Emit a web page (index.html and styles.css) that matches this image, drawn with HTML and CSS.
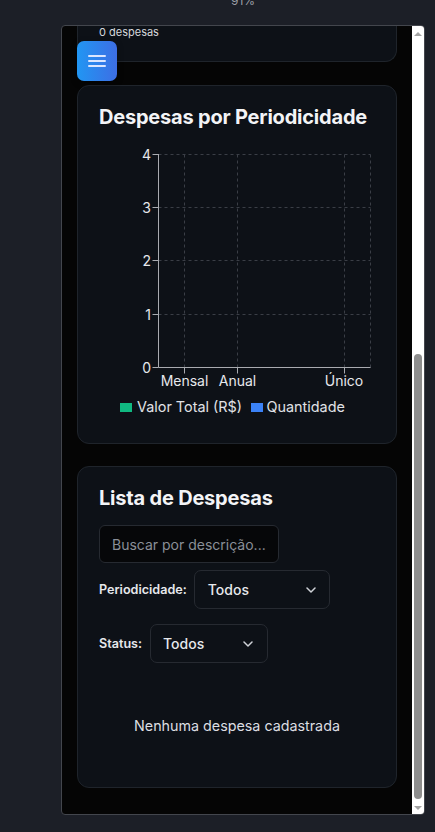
FILE: index.html
```html
<!DOCTYPE html>
<html lang="pt-BR">
<head>
<meta charset="utf-8">
<title>Despesas</title>
<link rel="stylesheet" href="styles.css">
</head>
<body>
<div class="zoom-level"><span>91%</span></div>
<div class="frame">
  <div class="viewport">
    <button class="menu-btn" aria-label="Menu">
      <svg width="18" height="14" viewBox="0 0 18 14"><path d="M1 2h16M1 7h16M1 12h16" stroke="#dbe6ff" stroke-width="2" stroke-linecap="round"/></svg>
    </button>
    <section class="card card-partial">
      <p class="count">0 despesas</p>
    </section>
    <section class="card card-chart">
      <h2 class="card-title">Despesas por Periodicidade</h2>
      <svg class="chart" width="276" height="290" viewBox="0 0 276 290">
        <g class="grid" stroke="#3a3e46" stroke-width="1" stroke-dasharray="3 3" fill="none">
          <path d="M59.5 23.5H271.5M59.5 76.5H271.5M59.5 129.5H271.5M59.5 183.5H271.5"/>
          <path d="M85.5 23.5V236.5M138.5 23.5V236.5M245.5 23.5V236.5M271.5 23.5V236.5"/>
        </g>
        <g class="axis" stroke="#a9abb0" stroke-width="1" fill="none">
          <path d="M59.5 23V236.5H271.5"/>
          <path d="M53.5 23.5H59.5M53.5 76.5H59.5M53.5 129.5H59.5M53.5 183.5H59.5M53.5 236.5H59.5"/>
          <path d="M85.5 236.5V242.5M138.5 236.5V242.5M245.5 236.5V242.5"/>
        </g>
        <g class="ticks" text-anchor="end">
          <text x="52" y="29">4</text>
          <text x="52" y="82">3</text>
          <text x="52" y="135">2</text>
          <text x="52" y="189">1</text>
          <text x="52" y="242">0</text>
        </g>
        <g class="ticks" text-anchor="middle">
          <text x="85.5" y="255">Mensal</text>
          <text x="138.5" y="255">Anual</text>
          <text x="245" y="255">Único</text>
        </g>
        <g class="legend">
          <rect x="21" y="272" width="12" height="9" fill="#10b981"/>
          <text x="38" y="281">Valor Total (R$)</text>
          <rect x="152" y="272" width="12" height="9" fill="#3b82f6"/>
          <text x="167.5" y="281">Quantidade</text>
        </g>
      </svg>
    </section>
    <section class="card card-list">
      <h2 class="card-title">Lista de Despesas</h2>
      <input class="search" type="text" placeholder="Buscar por descrição...">
      <div class="filter">
        <span class="filter-label">Periodicidade:</span>
        <div class="select select-wide">
          <span>Todos</span>
          <svg width="10" height="6" viewBox="0 0 10 6"><path d="M1 1l4 4 4-4" stroke="#cfd2d8" stroke-width="1.5" fill="none" stroke-linecap="round" stroke-linejoin="round"/></svg>
        </div>
      </div>
      <div class="filter filter-status">
        <span class="filter-label">Status:</span>
        <div class="select select-narrow">
          <span>Todos</span>
          <svg width="10" height="6" viewBox="0 0 10 6"><path d="M1 1l4 4 4-4" stroke="#cfd2d8" stroke-width="1.5" fill="none" stroke-linecap="round" stroke-linejoin="round"/></svg>
        </div>
      </div>
      <p class="empty">Nenhuma despesa cadastrada</p>
    </section>
  </div>
  <div class="scrollbar">
    <span class="arrow arrow-up"></span>
    <span class="thumb"></span>
    <span class="arrow arrow-down"></span>
  </div>
</div>
</body>
</html>
```
FILE: styles.css
```css
* { box-sizing: border-box; }

body {
  margin: 0;
  height: 832px;
  overflow: hidden;
  background: #1c1f27;
  font-family: Inter, "Noto Sans", sans-serif;
  color: #e6e8ec;
}

.zoom-level {
  height: 25px;
  overflow: hidden;
  padding-left: 231px;
  color: #9b9ea5;
  font-size: 12px;
}
.zoom-level span {
  display: block;
  line-height: 12px;
  margin-top: -5px;
}

.frame {
  margin-left: 61px;
  width: 364px;
  height: 790px;
  border: 1px solid #43464d;
  border-radius: 4px;
  background: #050505;
  display: flex;
  overflow: hidden;
}

.viewport {
  flex: 1;
  position: relative;
  padding-left: 15px;
  overflow: hidden;
}

.menu-btn {
  position: absolute;
  left: 15px;
  top: 15px;
  width: 40px;
  height: 40px;
  border: none;
  border-radius: 7px;
  background: linear-gradient(90deg, #2196f3, #3d6ee4);
  display: flex;
  align-items: center;
  justify-content: center;
  padding: 0;
  box-shadow: 0 2px 6px rgba(0, 0, 0, 0.4);
}

.card {
  width: 320px;
  background: #0d1117;
  border: 1px solid #1f242b;
  border-radius: 12px;
  padding: 17px 21px;
}

.card-partial {
  height: 36px;
  border-top: none;
  border-radius: 0 0 12px 12px;
  padding-top: 0;
}
.count {
  margin: 0;
  font-size: 11px;
  line-height: 13px;
  color: #d6d8dc;
}

.card-chart {
  margin-top: 23px;
  height: 359px;
}

.card-title {
  margin: 0;
  font-size: 20px;
  line-height: 28px;
  font-weight: 700;
  color: #f3f4f6;
  letter-spacing: -0.2px;
}

.chart {
  display: block;
}
.ticks text {
  font-family: Inter, "Noto Sans", sans-serif;
  font-size: 14px;
  fill: #e6e8ec;
}
.legend text {
  font-family: Inter, "Noto Sans", sans-serif;
  font-size: 14.4px;
  fill: #e0e2e6;
}

.card-list {
  margin-top: 22px;
  height: 322px;
}

.search {
  display: block;
  margin-top: 13px;
  width: 180px;
  height: 38px;
  border: 1px solid #262a31;
  border-radius: 6px;
  background: #060709;
  padding: 0 12px;
  font-family: inherit;
  font-size: 14px;
  color: #e6e8ec;
}
.search::placeholder {
  color: #8a8f98;
}

.filter {
  display: flex;
  align-items: center;
  gap: 7px;
  margin-top: 7px;
}
.filter-status {
  margin-top: 15px;
  gap: 8px;
}
.filter-label {
  font-size: 12.6px;
  font-weight: 600;
  color: #e6e8ec;
}

.select {
  height: 39px;
  border: 1px solid #262a31;
  border-radius: 7px;
  display: flex;
  align-items: center;
  justify-content: space-between;
  padding: 0 13px;
  font-size: 14px;
  font-weight: 500;
  color: #e6e8ec;
}
.select-wide { width: 136px; }
.select-narrow { width: 118px; padding-right: 14px; padding-left: 12px; }

.empty {
  margin: 53px 0 0;
  text-align: center;
  font-size: 14.3px;
  line-height: 20px;
  color: #dcdee2;
}

.scrollbar {
  width: 12px;
  background: #ffffff;
  display: flex;
  flex-direction: column;
  align-items: center;
}
.arrow {
  width: 0;
  height: 0;
  border-left: 4px solid transparent;
  border-right: 4px solid transparent;
}
.arrow-up {
  margin-top: 6px;
  border-bottom: 4px solid #a3a3a3;
}
.thumb {
  width: 8px;
  height: 445px;
  margin-top: 318px;
  border-radius: 4px;
  background: #8e8e8e;
}
.arrow-down {
  margin-top: 7px;
  border-top: 4px solid #a3a3a3;
}
```
